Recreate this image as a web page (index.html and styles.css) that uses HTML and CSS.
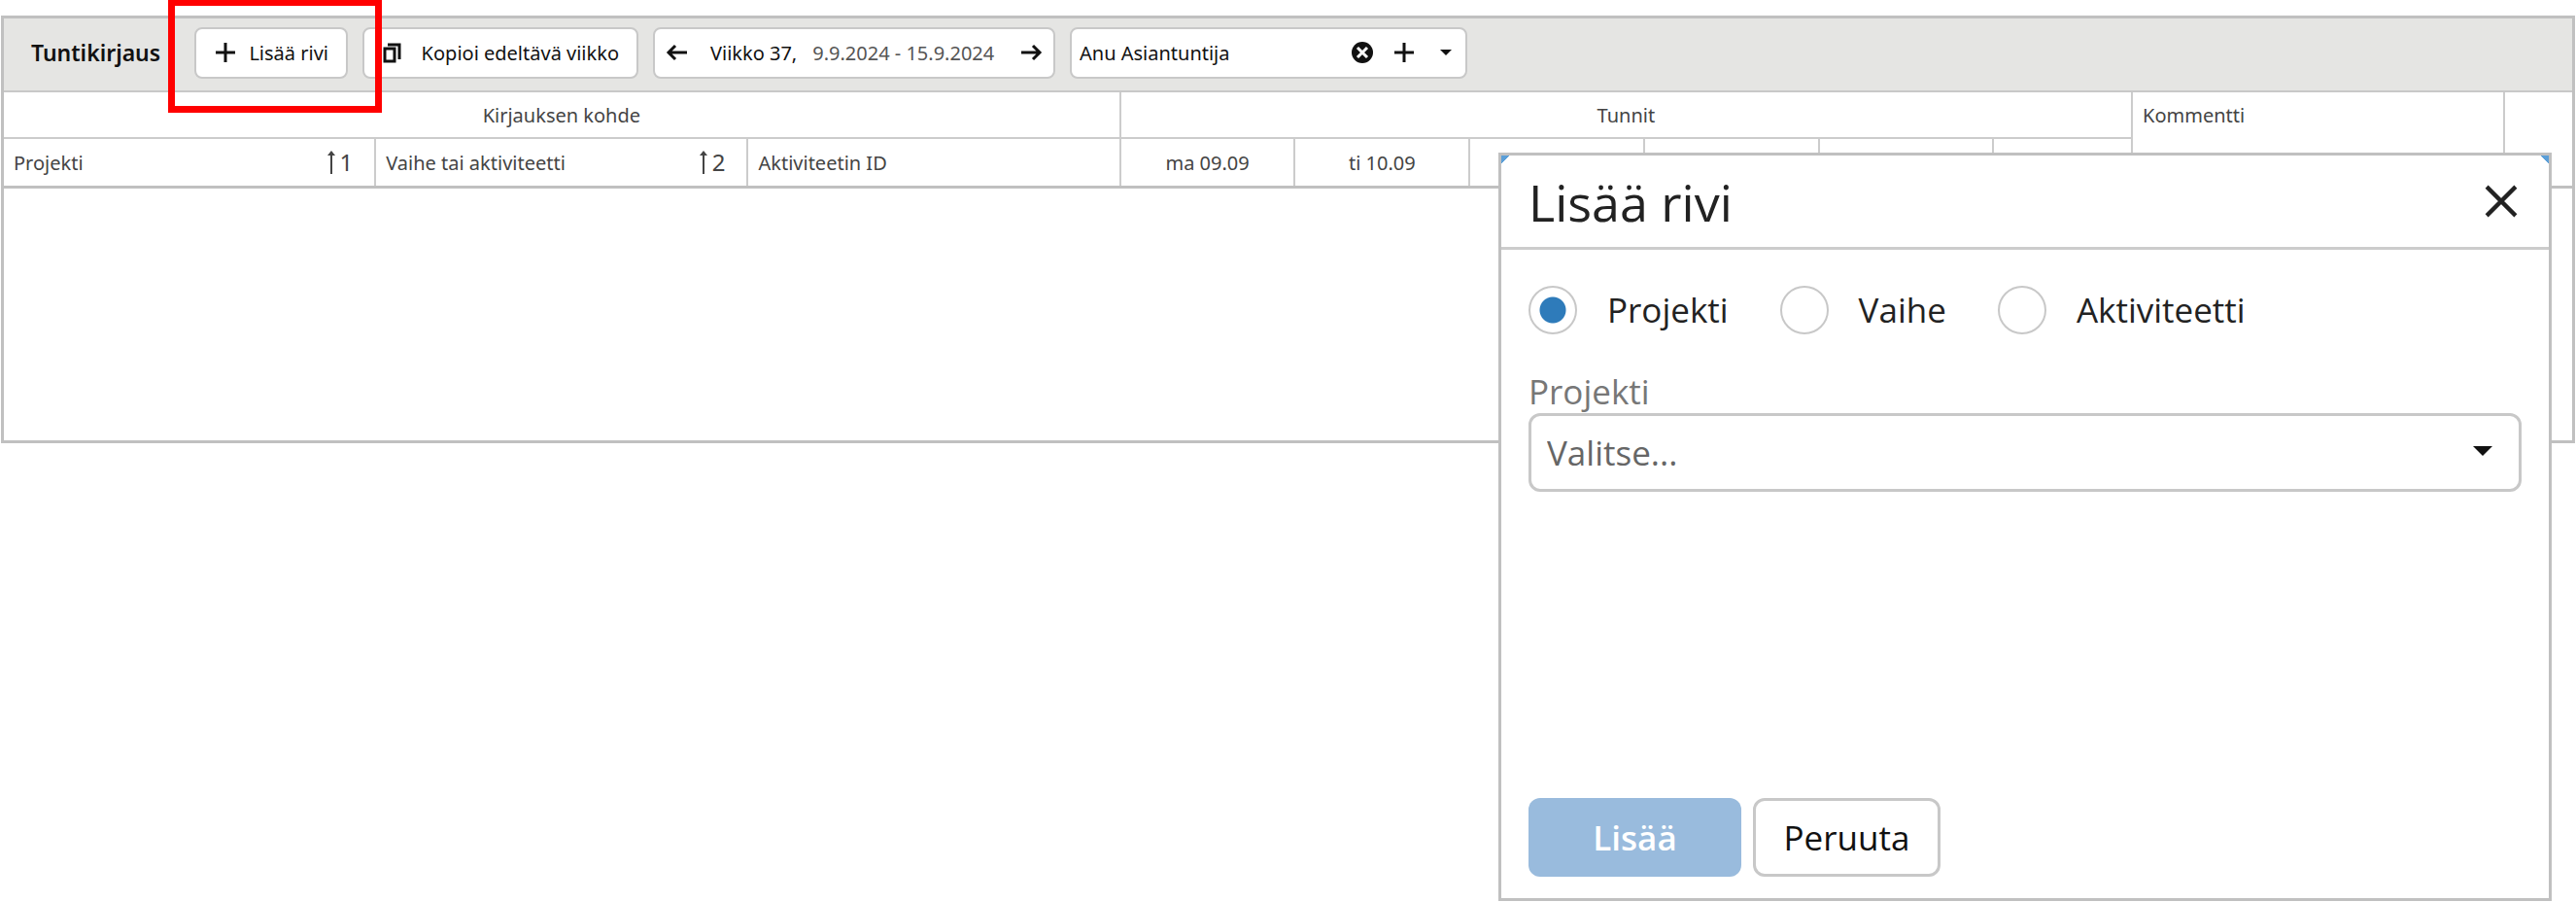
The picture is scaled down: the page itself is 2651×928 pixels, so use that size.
FILE: index.html
```html
<!DOCTYPE html>
<html lang="fi">
<head>
  <meta charset="UTF-8" />
  <meta name="viewport" content="width=device-width, initial-scale=1.0" />
  <title>Tuntikirjaus</title>

  <link rel="stylesheet" href="styles.css">
</head>
<body>

  <main class="timesheet">
    <!-- Työkalupalkki -->
    <div class="toolbar">
      <h1>Tuntikirjaus</h1>

      <div class="highlight-anchor">
        <button type="button" class="tool-button add-row">
          <svg class="icon" viewBox="0 0 24 24"><path d="M12 2v20M2 12h20" /></svg>
          Lisää rivi
        </button>
        <div class="highlight"></div>
      </div>

      <button type="button" class="tool-button copy-week">
        <svg class="icon" viewBox="0 0 24 24"><path d="M3 8h10v13H3zM6 4h12v15" /></svg>
        Kopioi edeltävä viikko
      </button>

      <div class="week-picker">
        <button type="button" class="icon-button" aria-label="Edellinen viikko">
          <svg class="icon" viewBox="0 0 24 24"><path d="M22 12H3M10 5l-7 7 7 7" /></svg>
        </button>
        <span class="week">Viikko 37,</span>
        <span class="dates">9.9.2024 - 15.9.2024</span>
        <button type="button" class="icon-button" aria-label="Seuraava viikko">
          <svg class="icon" viewBox="0 0 24 24"><path d="M2 12h19M14 5l7 7-7 7" /></svg>
        </button>
      </div>

      <div class="person-picker">
        <input type="text" value="Anu Asiantuntija" aria-label="Henkilö" />
        <button type="button" class="icon-button" aria-label="Tyhjennä">
          <svg class="icon clear" viewBox="0 0 24 24"><circle cx="12" cy="12" r="11" /><path d="M7 7l10 10M17 7L7 17" /></svg>
        </button>
        <button type="button" class="icon-button" aria-label="Lisää henkilö">
          <svg class="icon" viewBox="0 0 24 24"><path d="M12 2v20M2 12h20" /></svg>
        </button>
        <button type="button" class="icon-button" aria-label="Avaa lista">
          <svg class="icon caret" viewBox="0 0 24 24"><path d="M6 9h12l-6 6z" /></svg>
        </button>
      </div>
    </div>

    <!-- Tuntitaulukko -->
    <table class="hours">
      <colgroup>
        <col class="col-target" />
        <col class="col-target" />
        <col class="col-target" />
        <col class="col-day" />
        <col class="col-day" />
        <col class="col-day" />
        <col class="col-day" />
        <col class="col-day" />
        <col class="col-total" />
        <col class="col-target" />
        <col />
      </colgroup>
      <thead>
        <tr>
          <th colspan="3">Kirjauksen kohde</th>
          <th colspan="6">Tunnit</th>
          <th rowspan="2" class="left top">Kommentti</th>
          <th rowspan="2"></th>
        </tr>
        <tr>
          <th class="left">
            <div class="sortable">Projekti <span class="sort"><svg viewBox="0 0 10 26"><path d="M5 25V3" /><path class="head" d="M1 6l4-5 4 5z" /></svg>1</span></div>
          </th>
          <th class="left">
            <div class="sortable">Vaihe tai aktiviteetti <span class="sort"><svg viewBox="0 0 10 26"><path d="M5 25V3" /><path class="head" d="M1 6l4-5 4 5z" /></svg>2</span></div>
          </th>
          <th class="left">Aktiviteetin ID</th>
          <th>ma 09.09</th>
          <th>ti 10.09</th>
          <th>ke 11.09</th>
          <th>to 12.09</th>
          <th>pe 13.09</th>
          <th>Yhteensä</th>
        </tr>
      </thead>
    </table>
  </main>

  <!-- Lisää rivi -ikkuna -->
  <div class="dialog" role="dialog" aria-labelledby="dialogTitle">
    <header class="dialog-header">
      <h2 id="dialogTitle">Lisää rivi</h2>
      <button type="button" class="close-button" aria-label="Sulje">
        <svg viewBox="0 0 32 32"><path d="M2 2l28 28M30 2L2 30" /></svg>
      </button>
    </header>
    <form class="dialog-form">
      <div class="radio-group">
        <label><input type="radio" name="level" checked /> Projekti</label>
        <label><input type="radio" name="level" /> Vaihe</label>
        <label><input type="radio" name="level" /> Aktiviteetti</label>
      </div>

      <label class="field-label" for="project">Projekti</label>
      <div class="select-box">
        <select id="project">
          <option>Valitse...</option>
        </select>
        <svg class="select-caret" viewBox="0 0 20 10"><path d="M0 0h20L10 10z" /></svg>
      </div>

      <div class="button-group">
        <button type="submit" class="submit-button" disabled>Lisää</button>
        <button type="button" class="cancel-button">Peruuta</button>
      </div>
    </form>
  </div>

</body>
</html>
```
FILE: styles.css
```css
* {
  box-sizing: border-box;
}

body {
  font-family: "Noto Sans", "Open Sans", sans-serif;
  font-size: 20px;
  color: #444;
  background-color: #fff;
  margin: 0;
  padding: 16px 1px 0;
}

button,
input,
select {
  font: inherit;
  color: #111;
}

.timesheet {
  min-height: 440px;
  border: 3px solid #c0c0c0;
}

.toolbar {
  display: flex;
  align-items: center;
  gap: 15px;
  height: 76px;
  padding: 0 28px 4px;
  background-color: #e5e5e3;
  border-bottom: 2px solid #c8c8c8;
}

.toolbar h1 {
  width: 153px;
  margin: 0;
  font-size: 23px;
  font-weight: 600;
  color: #111;
}

.tool-button,
.week-picker,
.person-picker {
  display: flex;
  align-items: center;
  height: 53px;
  background-color: #fff;
  border: 2px solid #c8c8c8;
  border-radius: 8px;
}

.tool-button {
  justify-content: space-between;
  padding: 0 18px;
  white-space: nowrap;
}

.add-row {
  width: 158px;
}

.copy-week {
  width: 284px;
}

.icon {
  display: block;
  width: 24px;
  height: 24px;
  fill: none;
  stroke: #111;
  stroke-width: 3;
}

.icon-button {
  padding: 0;
  background: none;
  border: none;
}

/* Korostus napin ympärillä */
.highlight-anchor {
  position: relative;
}

.highlight {
  position: absolute;
  top: -29px;
  left: -27px;
  width: 220px;
  height: 117px;
  border: 7px solid #f00;
  pointer-events: none;
  z-index: 1;
}

.week-picker {
  width: 414px;
  padding: 0 11px;
}

.week {
  margin-left: 22px;
  color: #111;
}

.dates {
  margin: 0 auto 0 16px;
  color: #555;
}

.person-picker {
  width: 409px;
  gap: 19px;
  padding: 0 8px;
}

.person-picker input {
  flex: 1;
  min-width: 0;
  padding: 0;
  border: none;
  outline: none;
}

.clear circle {
  fill: #111;
  stroke: none;
}

.clear path {
  stroke: #fff;
}

.caret {
  fill: #111;
  stroke: none;
}

.hours {
  width: 100%;
  table-layout: fixed;
  border-collapse: separate;
  border-spacing: 0;
  border-bottom: 3px solid #c0c0c0;
}

.col-target {
  width: 14.5%;
}

.col-day {
  width: 6.8%;
}

.col-total {
  width: 5.4%;
}

.hours th {
  height: 48px;
  padding: 0 10px;
  font-weight: normal;
  border-right: 2px solid #ccc;
  border-bottom: 2px solid #ccc;
}

.hours tr:last-child th,
.hours th[rowspan] {
  border-bottom: none;
}

.hours th:last-child[rowspan] {
  border-right: none;
}

.hours .left {
  text-align: left;
}

.hours .top {
  padding-top: 10px;
  vertical-align: top;
}

.sortable {
  display: flex;
  justify-content: space-between;
  align-items: center;
}

.sort {
  display: flex;
  align-items: center;
  gap: 4px;
  padding-right: 12px;
  font-size: 24px;
  line-height: 28px;
}

.sort svg {
  width: 10px;
  height: 26px;
  fill: none;
  stroke: #444;
  stroke-width: 2;
}

.sort .head {
  fill: #444;
  stroke: none;
}

.dialog {
  position: absolute;
  top: 157px;
  right: 25px;
  width: 1084px;
  height: 770px;
  display: flex;
  flex-direction: column;
  font-family: "Open Sans", "Noto Sans", sans-serif;
  font-size: 35px;
  color: #222;
  background: linear-gradient(135deg, #5b9fd8 6px, transparent 6px), linear-gradient(225deg, #5b9fd8 6px, transparent 6px), #fff;
  border: 3px solid #c0c0c0;
}

.dialog-header {
  display: flex;
  justify-content: space-between;
  align-items: center;
  height: 97px;
  padding: 0 32px 0 28px;
  border-bottom: 3px solid #ccc;
}

.dialog-header h2 {
  margin: 0;
  font-size: 52px;
  font-weight: normal;
}

.close-button {
  padding: 0;
  background: none;
  border: none;
}

.close-button svg {
  display: block;
  width: 34px;
  height: 34px;
  fill: none;
  stroke: #222;
  stroke-width: 4;
}

.dialog-form {
  flex: 1;
  display: flex;
  flex-direction: column;
  padding: 36px 28px 22px;
}

.radio-group {
  display: flex;
  gap: 53px;
}

.radio-group label {
  display: flex;
  align-items: center;
  gap: 31px;
  line-height: 52px;
}

.radio-group input {
  appearance: none;
  width: 50px;
  height: 50px;
  margin: 0;
  border: 2px solid #c8c8c8;
  border-radius: 50%;
}

.radio-group input:checked {
  background: radial-gradient(circle, #2e7bba 13px, transparent 14px);
}

.field-label {
  margin-top: 36px;
  line-height: 44px;
  color: #777;
}

.select-box {
  position: relative;
}

.select-box select {
  appearance: none;
  display: block;
  width: 100%;
  height: 81px;
  padding: 0 16px;
  color: #666;
  background-color: #fff;
  border: 3px solid #c8c8c8;
  border-radius: 12px;
}

.select-caret {
  position: absolute;
  top: 34px;
  right: 30px;
  width: 20px;
  height: 10px;
  fill: #111;
  pointer-events: none;
}

.button-group {
  display: flex;
  gap: 12px;
  margin-top: auto;
}

.button-group button {
  height: 81px;
  border-radius: 12px;
}

.submit-button {
  width: 219px;
  font-weight: 600;
  color: #fff;
  background-color: #99bbdd;
  border: none;
}

.cancel-button {
  width: 193px;
  padding: 0;
  background-color: #fff;
  border: 3px solid #c8c8c8;
}
```
